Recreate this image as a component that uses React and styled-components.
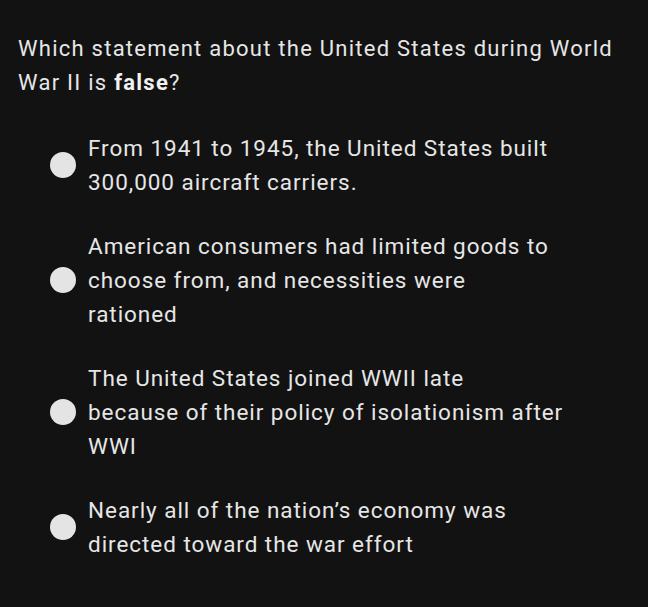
import React from "react";
import styled, { createGlobalStyle } from "styled-components";

const Global = createGlobalStyle`
  html, body { margin: 0; padding: 0; background: #121212; }
  body { font-family: Roboto, "Noto Sans", sans-serif; }
`;

const Page = styled.div`
  width: 648px;
  height: 607px;
  box-sizing: border-box;
  padding: 32px 18px 0 18px;
  background: #121212;
  color: #e6e6e6;
`;

const Question = styled.p`
  margin: 0;
  font-size: 22px;
  line-height: 34px;
  letter-spacing: 1.25px;
  strong { font-weight: 700; color: #f2f2f2; }
`;

const Options = styled.ul`
  list-style: none;
  margin: 31px 0 0 0;
  padding: 0 0 0 32px;
  display: flex;
  flex-direction: column;
  gap: 30px;
`;

const Option = styled.li`
  display: flex;
  align-items: center;
  gap: 12px;
`;

const Radio = styled.span`
  flex: none;
  width: 26px;
  height: 26px;
  border-radius: 50%;
  background: #e4e4e4;
`;

const Label = styled.span`
  font-size: 22.5px;
  line-height: 34px;
  letter-spacing: 0.95px;
  white-space: nowrap;
`;

const options = [
  ["From 1941 to 1945, the United States built", "300,000 aircraft carriers."],
  ["American consumers had limited goods to", "choose from, and necessities were", "rationed"],
  ["The United States joined WWII late", "because of their policy of isolationism after", "WWI"],
  ["Nearly all of the nation\u2019s economy was", "directed toward the war effort"],
];

export default function App() {
  return (
    <Page>
      <Global />
      <Question>
        Which statement about the United States during World
        <br />
        War II is <strong>false</strong>?
      </Question>
      <Options>
        {options.map((lines, i) => (
          <Option key={i}>
            <Radio />
            <Label>
              {lines.map((l, j) => (
                <React.Fragment key={j}>
                  {j > 0 && <br />}
                  {l}
                </React.Fragment>
              ))}
            </Label>
          </Option>
        ))}
      </Options>
    </Page>
  );
}
